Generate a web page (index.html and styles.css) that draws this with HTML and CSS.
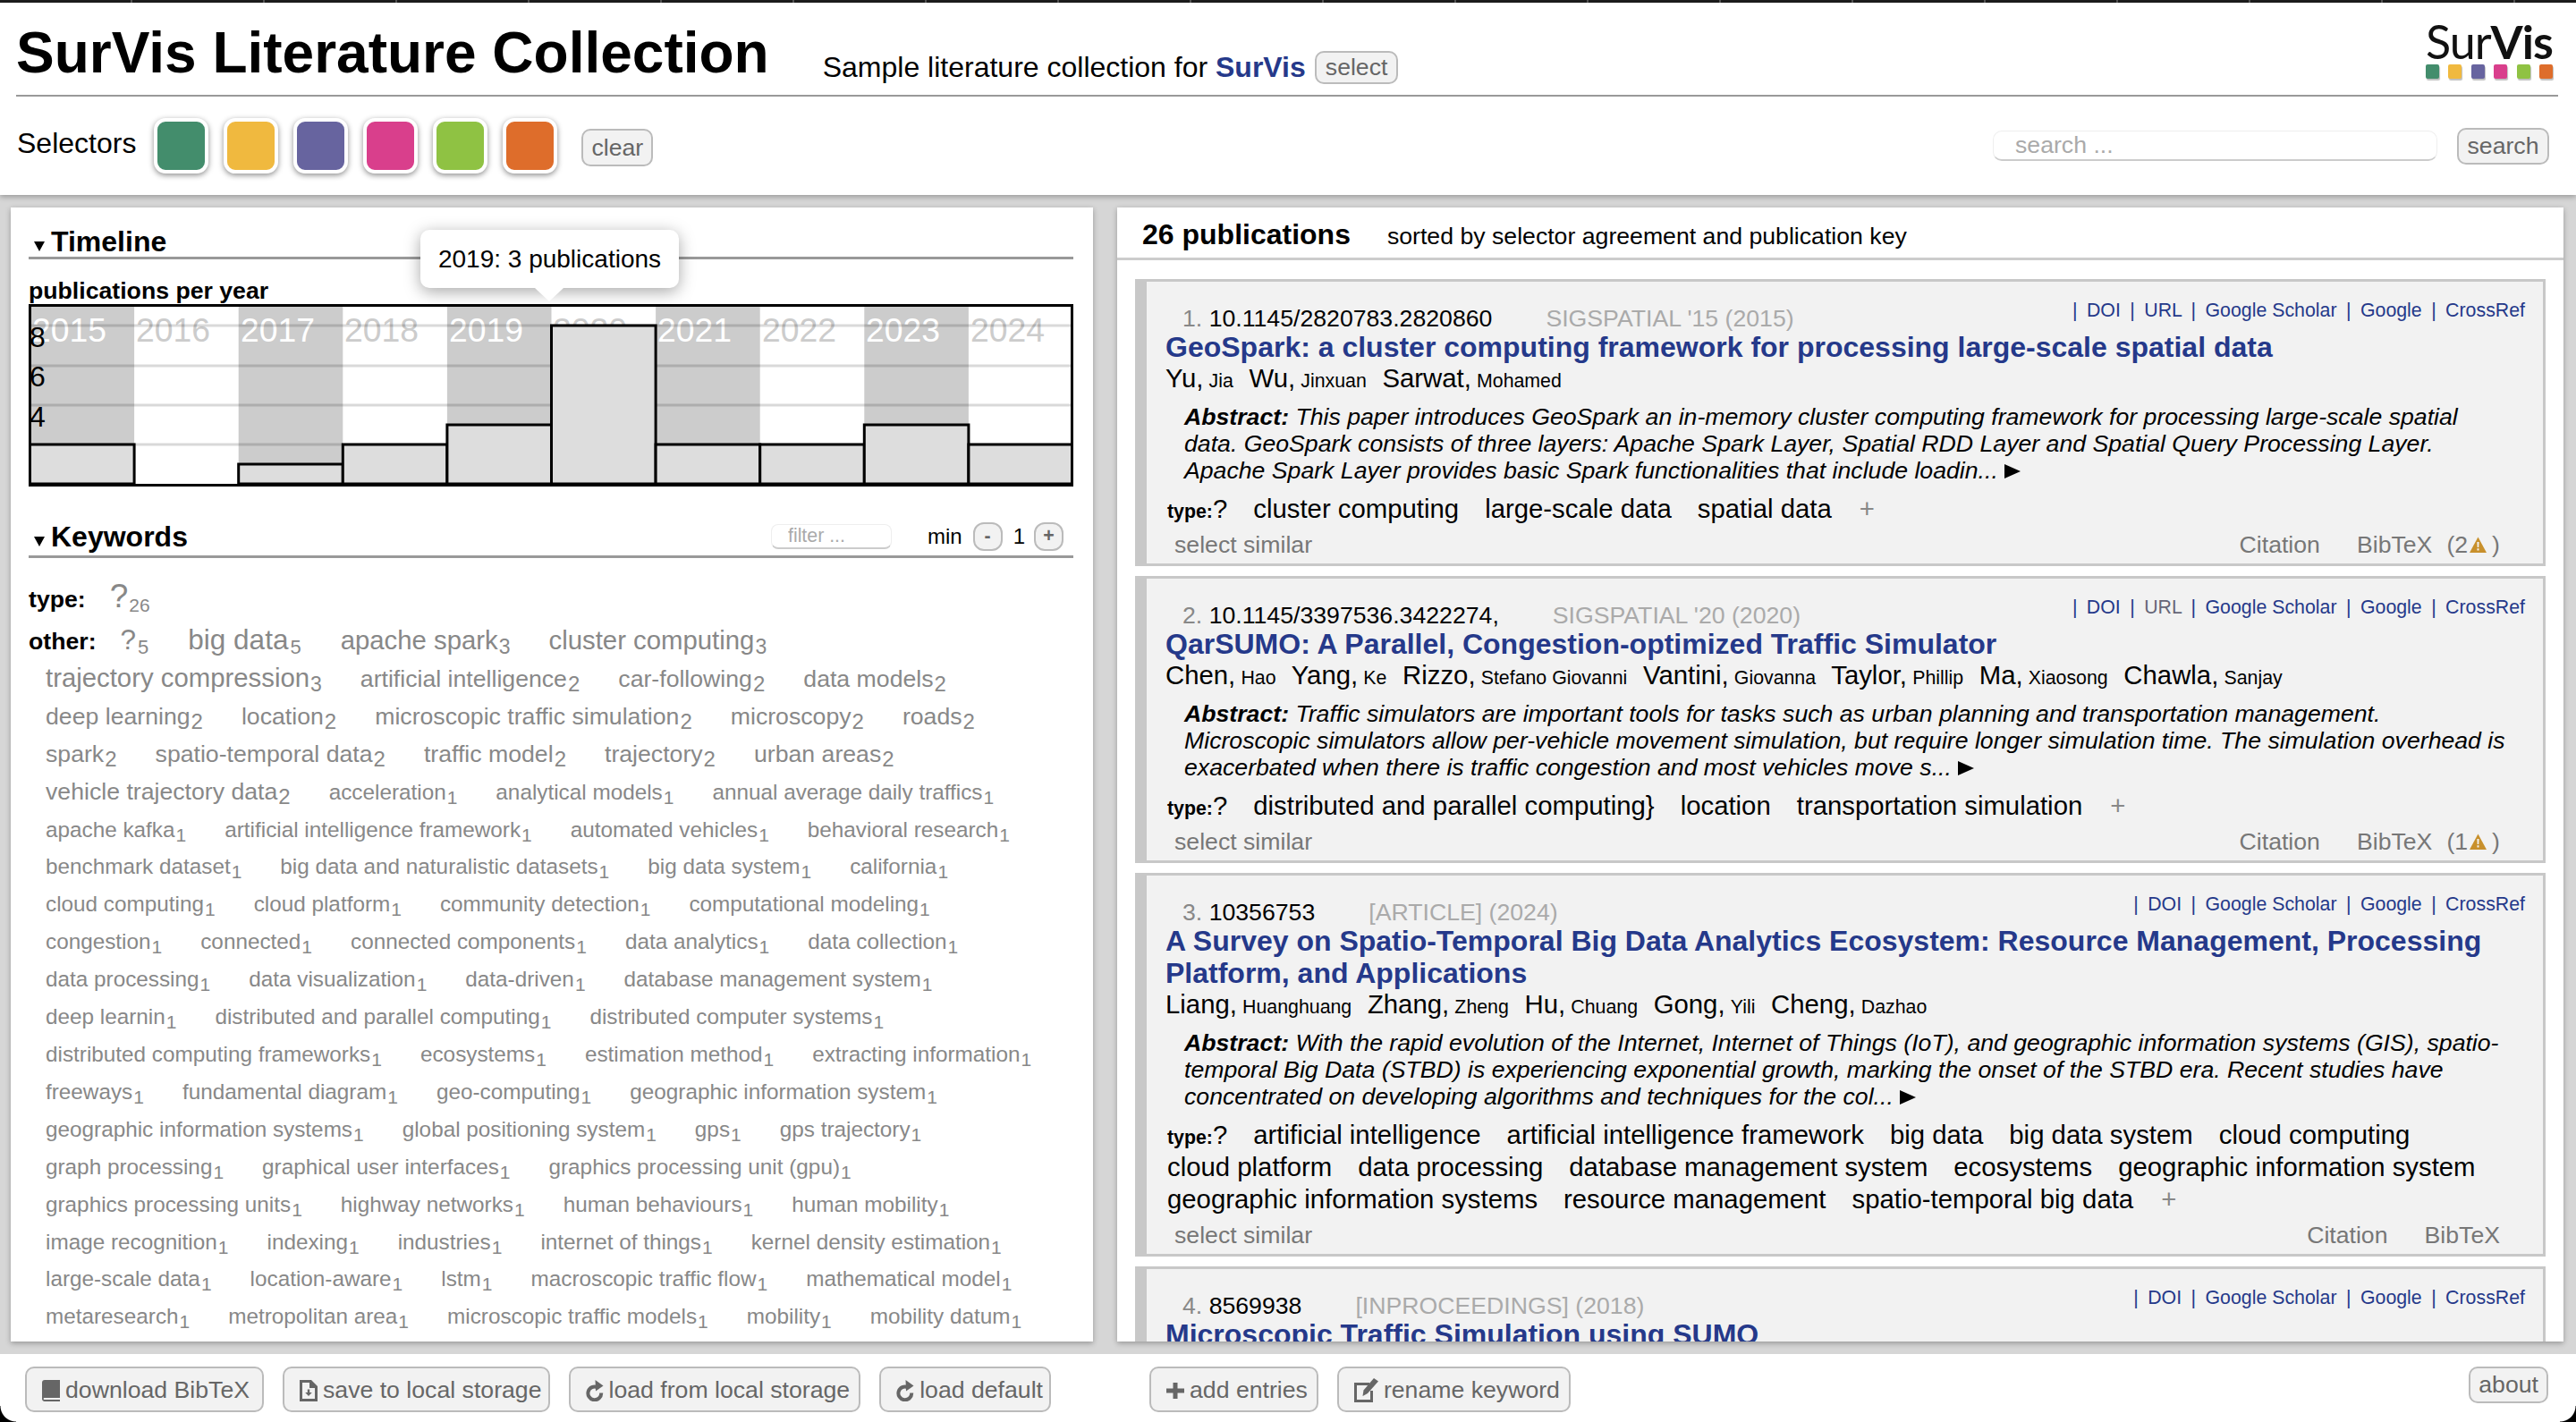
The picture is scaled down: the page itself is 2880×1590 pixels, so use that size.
FILE: index.html
```html
<!DOCTYPE html>
<html lang="en">

<head>
    <meta charset="UTF-8">
    <title>SurVis Literature Collection</title>
    <link rel="stylesheet" href="styles.css">
</head>

<body>
    <div class="top-strip"></div>

    <header class="page-head">
        <div class="title-row">
            <h1>SurVis Literature Collection</h1>
            <p class="subtitle">Sample literature collection for <a class="survis-link">SurVis</a></p>
            <button class="btn btn-select">select</button>
            <div class="logo">
                <div class="logo-text">Sur<b>Vis</b></div>
                <div class="logo-squares">
                    <i class="c-green"></i><i class="c-yellow"></i><i class="c-purple"></i><i class="c-pink"></i><i class="c-lime"></i><i class="c-orange"></i>
                </div>
            </div>
        </div>
        <div class="selector-row">
            <span class="selector-label">Selectors</span>
            <div class="selectors">
                <div class="selector c-green"></div>
                <div class="selector c-yellow"></div>
                <div class="selector c-purple"></div>
                <div class="selector c-pink"></div>
                <div class="selector c-lime"></div>
                <div class="selector c-orange"></div>
            </div>
            <button class="btn btn-clear">clear</button>
            <input class="search-input" type="text" placeholder="search ...">
            <button class="btn btn-search">search</button>
        </div>
    </header>

    <main class="panels">
        <section class="panel panel-left">
            <h2 class="section-head"><span class="arrow"></span>Timeline</h2>
            <div class="chart-title">publications per year</div>
            <svg class="chart" width="1168" height="204" viewBox="0 0 1168 204">
                <rect class="col" x="1.5" y="3" width="116.6" height="198"></rect>
                <rect class="col" x="234.7" y="3" width="116.6" height="198"></rect>
                <rect class="col" x="467.9" y="3" width="116.6" height="198"></rect>
                <rect class="col" x="701.1" y="3" width="116.6" height="198"></rect>
                <rect class="col" x="934.3" y="3" width="116.6" height="198"></rect>

                <text class="year on-grey" x="4" y="42">2015</text>
                <text class="year" x="120" y="42">2016</text>
                <text class="year on-grey" x="237" y="42">2017</text>
                <text class="year" x="353" y="42">2018</text>
                <text class="year on-grey" x="470" y="42">2019</text>
                <text class="year" x="586" y="42">2020</text>
                <text class="year on-grey" x="703" y="42">2021</text>
                <text class="year" x="820" y="42">2022</text>
                <text class="year on-grey" x="936" y="42">2023</text>
                <text class="year" x="1053" y="42">2024</text>

                <line class="grid" x1="3" x2="1165" y1="24" y2="24"></line>
                <line class="grid" x1="3" x2="1165" y1="69" y2="69"></line>
                <line class="grid" x1="3" x2="1165" y1="113" y2="113"></line>
                <line class="grid" x1="3" x2="1165" y1="157" y2="157"></line>

                <text class="axis" x="1" y="48">8</text>
                <text class="axis" x="1" y="92">6</text>
                <text class="axis" x="1" y="137">4</text>

                <rect class="bar" x="1.5" y="157" width="116.6" height="44"></rect>
                <rect class="bar" x="118.1" y="201" width="116.6" height="0"></rect>
                <rect class="bar" x="234.7" y="179" width="116.6" height="22"></rect>
                <rect class="bar" x="351.3" y="157" width="116.6" height="44"></rect>
                <rect class="bar" x="467.9" y="135" width="116.6" height="66"></rect>
                <rect class="bar" x="584.5" y="24" width="116.6" height="177"></rect>
                <rect class="bar" x="701.1" y="157" width="116.6" height="44"></rect>
                <rect class="bar" x="817.7" y="157" width="116.6" height="44"></rect>
                <rect class="bar" x="934.3" y="135" width="116.6" height="66"></rect>
                <rect class="bar" x="1050.9" y="157" width="116.6" height="44"></rect>

                <rect class="frame" x="1.5" y="1.5" width="1165" height="201"></rect>
            </svg>
            <div class="tooltip">2019: 3 publications</div>

            <div class="section-head keywords-head">
                <h2 class="keywords-title"><span class="arrow"></span>Keywords</h2>
                <input class="filter-input" type="text" placeholder="filter ...">
                <span class="min-label">min</span>
                <button class="btn btn-step">-</button>
                <span class="min-value">1</span>
                <button class="btn btn-step">+</button>
            </div>

            <div class="tag-cloud tag-cloud-type">
                <span class="cloud-label">type:</span>
                <span class="tag s26">?<sub>26</sub></span>
            </div>
            <div class="tag-cloud">
                <span class="cloud-label">other:</span>
                <span class="tag s5">?<sub>5</sub></span>
                <span class="tag s5">big data<sub>5</sub></span>
                <span class="tag s3">apache spark<sub>3</sub></span>
                <span class="tag s3">cluster computing<sub>3</sub></span>
                <span class="tag s3">trajectory compression<sub>3</sub></span>
                <span class="tag s2">artificial intelligence<sub>2</sub></span>
                <span class="tag s2">car-following<sub>2</sub></span>
                <span class="tag s2">data models<sub>2</sub></span>
                <span class="tag s2">deep learning<sub>2</sub></span>
                <span class="tag s2">location<sub>2</sub></span>
                <span class="tag s2">microscopic traffic simulation<sub>2</sub></span>
                <span class="tag s2">microscopy<sub>2</sub></span>
                <span class="tag s2">roads<sub>2</sub></span>
                <span class="tag s2">spark<sub>2</sub></span>
                <span class="tag s2">spatio-temporal data<sub>2</sub></span>
                <span class="tag s2">traffic model<sub>2</sub></span>
                <span class="tag s2">trajectory<sub>2</sub></span>
                <span class="tag s2">urban areas<sub>2</sub></span>
                <span class="tag s2">vehicle trajectory data<sub>2</sub></span>
                <span class="tag">acceleration<sub>1</sub></span>
                <span class="tag">analytical models<sub>1</sub></span>
                <span class="tag">annual average daily traffics<sub>1</sub></span>
                <span class="tag">apache kafka<sub>1</sub></span>
                <span class="tag">artificial intelligence framework<sub>1</sub></span>
                <span class="tag">automated vehicles<sub>1</sub></span>
                <span class="tag">behavioral research<sub>1</sub></span>
                <span class="tag">benchmark dataset<sub>1</sub></span>
                <span class="tag">big data and naturalistic datasets<sub>1</sub></span>
                <span class="tag">big data system<sub>1</sub></span>
                <span class="tag">california<sub>1</sub></span>
                <span class="tag">cloud computing<sub>1</sub></span>
                <span class="tag">cloud platform<sub>1</sub></span>
                <span class="tag">community detection<sub>1</sub></span>
                <span class="tag">computational modeling<sub>1</sub></span>
                <span class="tag">congestion<sub>1</sub></span>
                <span class="tag">connected<sub>1</sub></span>
                <span class="tag">connected components<sub>1</sub></span>
                <span class="tag">data analytics<sub>1</sub></span>
                <span class="tag">data collection<sub>1</sub></span>
                <span class="tag">data processing<sub>1</sub></span>
                <span class="tag">data visualization<sub>1</sub></span>
                <span class="tag">data-driven<sub>1</sub></span>
                <span class="tag">database management system<sub>1</sub></span>
                <span class="tag">deep learnin<sub>1</sub></span>
                <span class="tag">distributed and parallel computing<sub>1</sub></span>
                <span class="tag">distributed computer systems<sub>1</sub></span>
                <span class="tag">distributed computing frameworks<sub>1</sub></span>
                <span class="tag">ecosystems<sub>1</sub></span>
                <span class="tag">estimation method<sub>1</sub></span>
                <span class="tag">extracting information<sub>1</sub></span>
                <span class="tag">freeways<sub>1</sub></span>
                <span class="tag">fundamental diagram<sub>1</sub></span>
                <span class="tag">geo-computing<sub>1</sub></span>
                <span class="tag">geographic information system<sub>1</sub></span>
                <span class="tag">geographic information systems<sub>1</sub></span>
                <span class="tag">global positioning system<sub>1</sub></span>
                <span class="tag">gps<sub>1</sub></span>
                <span class="tag">gps trajectory<sub>1</sub></span>
                <span class="tag">graph processing<sub>1</sub></span>
                <span class="tag">graphical user interfaces<sub>1</sub></span>
                <span class="tag">graphics processing unit (gpu)<sub>1</sub></span>
                <span class="tag">graphics processing units<sub>1</sub></span>
                <span class="tag">highway networks<sub>1</sub></span>
                <span class="tag">human behaviours<sub>1</sub></span>
                <span class="tag">human mobility<sub>1</sub></span>
                <span class="tag">image recognition<sub>1</sub></span>
                <span class="tag">indexing<sub>1</sub></span>
                <span class="tag">industries<sub>1</sub></span>
                <span class="tag">internet of things<sub>1</sub></span>
                <span class="tag">kernel density estimation<sub>1</sub></span>
                <span class="tag">large-scale data<sub>1</sub></span>
                <span class="tag">location-aware<sub>1</sub></span>
                <span class="tag">lstm<sub>1</sub></span>
                <span class="tag">macroscopic traffic flow<sub>1</sub></span>
                <span class="tag">mathematical model<sub>1</sub></span>
                <span class="tag">metaresearch<sub>1</sub></span>
                <span class="tag">metropolitan area<sub>1</sub></span>
                <span class="tag">microscopic traffic models<sub>1</sub></span>
                <span class="tag">mobility<sub>1</sub></span>
                <span class="tag">mobility datum<sub>1</sub></span>
            </div>
        </section>

        <section class="panel panel-right">
            <div class="list-head">
                <strong class="list-count">26 publications</strong>
                <span class="list-sort">sorted by selector agreement and publication key</span>
            </div>
            <div class="pub-list">
                <article class="pub">
                    <div class="pub-top">
                        <div class="pub-id"><span class="pub-num">1.</span> 10.1145/2820783.2820860<span class="pub-venue">SIGSPATIAL '15 (2015)</span></div>
                        <div class="pub-links"><i>|</i> DOI <i>|</i> URL <i>|</i> Google Scholar <i>|</i> Google <i>|</i> CrossRef</div>
                    </div>
                    <h3 class="pub-title">GeoSpark: a cluster computing framework for processing large-scale spatial data</h3>
                    <div class="pub-authors">
                        <span class="author">Yu, <small>Jia</small></span>
                        <span class="author">Wu, <small>Jinxuan</small></span>
                        <span class="author">Sarwat, <small>Mohamed</small></span>
                    </div>
                    <p class="pub-abstract"><b>Abstract:</b> This paper introduces GeoSpark an in-memory cluster computing framework for processing large-scale spatial data. GeoSpark consists of three layers: Apache Spark Layer, Spatial RDD Layer and Spatial Query Processing Layer. Apache Spark Layer provides basic Spark functionalities that include loadin... <span class="more"></span></p>
                    <div class="pub-tags">
                        <span class="pub-type"><b>type:</b>?</span>
                        <span>cluster computing</span>
                        <span>large-scale data</span>
                        <span>spatial data</span>
                        <span class="tag-add">+</span>
                    </div>
                    <div class="pub-foot">
                        <span>select similar</span>
                        <span class="pub-actions"><span>Citation</span><span>BibTeX</span><span class="warn-count">(2<svg class="warn" width="19" height="18" viewBox="0 0 19 18"><path d="M9.5 0.5 L19 18 H0 Z" fill="#c8902c"></path><path d="M8.4 6 H10.6 L10.3 12 H8.7 Z M8.5 13.3 H10.5 V15.4 H8.5 Z" fill="#f2f2f2"></path></svg>)</span></span>
                    </div>
                </article>

                <article class="pub">
                    <div class="pub-top">
                        <div class="pub-id"><span class="pub-num">2.</span> 10.1145/3397536.3422274,<span class="pub-venue">SIGSPATIAL '20 (2020)</span></div>
                        <div class="pub-links"><i>|</i> DOI <i>|</i> <span class="link-seen">URL</span> <i>|</i> Google Scholar <i>|</i> Google <i>|</i> CrossRef</div>
                    </div>
                    <h3 class="pub-title">QarSUMO: A Parallel, Congestion-optimized Traffic Simulator</h3>
                    <div class="pub-authors">
                        <span class="author">Chen, <small>Hao</small></span>
                        <span class="author">Yang, <small>Ke</small></span>
                        <span class="author">Rizzo, <small>Stefano Giovanni</small></span>
                        <span class="author">Vantini, <small>Giovanna</small></span>
                        <span class="author">Taylor, <small>Phillip</small></span>
                        <span class="author">Ma, <small>Xiaosong</small></span>
                        <span class="author">Chawla, <small>Sanjay</small></span>
                    </div>
                    <p class="pub-abstract"><b>Abstract:</b> Traffic simulators are important tools for tasks such as urban planning and transportation management. Microscopic simulators allow per-vehicle movement simulation, but require longer simulation time. The simulation overhead is exacerbated when there is traffic congestion and most vehicles move s... <span class="more"></span></p>
                    <div class="pub-tags">
                        <span class="pub-type"><b>type:</b>?</span>
                        <span>distributed and parallel computing}</span>
                        <span>location</span>
                        <span>transportation simulation</span>
                        <span class="tag-add">+</span>
                    </div>
                    <div class="pub-foot">
                        <span>select similar</span>
                        <span class="pub-actions"><span>Citation</span><span>BibTeX</span><span class="warn-count">(1<svg class="warn" width="19" height="18" viewBox="0 0 19 18"><path d="M9.5 0.5 L19 18 H0 Z" fill="#c8902c"></path><path d="M8.4 6 H10.6 L10.3 12 H8.7 Z M8.5 13.3 H10.5 V15.4 H8.5 Z" fill="#f2f2f2"></path></svg>)</span></span>
                    </div>
                </article>

                <article class="pub">
                    <div class="pub-top">
                        <div class="pub-id"><span class="pub-num">3.</span> 10356753<span class="pub-venue">[ARTICLE] (2024)</span></div>
                        <div class="pub-links"><i>|</i> DOI <i>|</i> Google Scholar <i>|</i> Google <i>|</i> CrossRef</div>
                    </div>
                    <h3 class="pub-title">A Survey on Spatio-Temporal Big Data Analytics Ecosystem: Resource Management, Processing Platform, and Applications</h3>
                    <div class="pub-authors">
                        <span class="author">Liang, <small>Huanghuang</small></span>
                        <span class="author">Zhang, <small>Zheng</small></span>
                        <span class="author">Hu, <small>Chuang</small></span>
                        <span class="author">Gong, <small>Yili</small></span>
                        <span class="author">Cheng, <small>Dazhao</small></span>
                    </div>
                    <p class="pub-abstract"><b>Abstract:</b> With the rapid evolution of the Internet, Internet of Things (IoT), and geographic information systems (GIS), spatio-temporal Big Data (STBD) is experiencing exponential growth, marking the onset of the STBD era. Recent studies have concentrated on developing algorithms and techniques for the col... <span class="more"></span></p>
                    <div class="pub-tags">
                        <span class="pub-type"><b>type:</b>?</span>
                        <span>artificial intelligence</span>
                        <span>artificial intelligence framework</span>
                        <span>big data</span>
                        <span>big data system</span>
                        <span>cloud computing</span>
                        <span>cloud platform</span>
                        <span>data processing</span>
                        <span>database management system</span>
                        <span>ecosystems</span>
                        <span>geographic information system</span>
                        <span>geographic information systems</span>
                        <span>resource management</span>
                        <span>spatio-temporal big data</span>
                        <span class="tag-add">+</span>
                    </div>
                    <div class="pub-foot">
                        <span>select similar</span>
                        <span class="pub-actions"><span>Citation</span><span>BibTeX</span></span>
                    </div>
                </article>

                <article class="pub">
                    <div class="pub-top">
                        <div class="pub-id"><span class="pub-num">4.</span> 8569938<span class="pub-venue">[INPROCEEDINGS] (2018)</span></div>
                        <div class="pub-links"><i>|</i> DOI <i>|</i> Google Scholar <i>|</i> Google <i>|</i> CrossRef</div>
                    </div>
                    <h3 class="pub-title">Microscopic Traffic Simulation using SUMO</h3>
                </article>
            </div>
        </section>
    </main>

    <footer class="page-foot">
        <div class="foot-group">
            <button class="btn btn-foot">
                <svg class="icon" width="20" height="24" viewBox="0 0 20 24"><path d="M3 0 H20 V20 H3 C2 20 1.6 20.6 1.6 21 C1.6 21.5 2 22 3 22 H20 V24 H3 C1 24 0 22.6 0 21 V3 C0 1.2 1.2 0 3 0 Z" fill="#666"></path></svg>
                download BibTeX
            </button>
            <button class="btn btn-foot">
                <svg class="icon" width="20" height="24" viewBox="0 0 20 24"><path fill-rule="evenodd" d="M0 0 H13 L20 7 V24 H0 Z M3 3 V21 H17 V9 H11 V3 Z" fill="#666"></path><path d="M8.8 10.5 H11.2 V14 H13.8 L10 18 L6.2 14 H8.8 Z" fill="#666"></path></svg>
                save to local storage
            </button>
            <button class="btn btn-foot">
                <svg class="icon" width="20" height="24" viewBox="0 0 20 24"><path d="M13 8.2 A7.4 7.4 0 1 0 17.2 14.5" fill="none" stroke="#666" stroke-width="4"></path><path d="M10.5 0 L19.5 6.5 L11 12.5 Z" fill="#666"></path></svg>
                load from local storage
            </button>
            <button class="btn btn-foot">
                <svg class="icon" width="20" height="24" viewBox="0 0 20 24"><path d="M13 8.2 A7.4 7.4 0 1 0 17.2 14.5" fill="none" stroke="#666" stroke-width="4"></path><path d="M10.5 0 L19.5 6.5 L11 12.5 Z" fill="#666"></path></svg>
                load default
            </button>
        </div>
        <div class="foot-group">
            <button class="btn btn-foot">
                <svg class="icon" width="20" height="18" viewBox="0 0 20 18"><path d="M7.5 0 H12.5 V6.5 H20 V11.5 H12.5 V18 H7.5 V11.5 H0 V6.5 H7.5 Z" fill="#666"></path></svg>
                add entries
            </button>
            <button class="btn btn-foot">
                <svg class="icon" width="27" height="27" viewBox="0 0 27 27"><path fill-rule="evenodd" d="M0 5 H17 V8 H3 V24 H18 V14 H21 V27 H0 Z" fill="#666"></path><path d="M22 0 L27 3.5 L15 17 L9.5 20 L10.5 13.5 Z" fill="#666"></path></svg>
                rename keyword
            </button>
        </div>
        <button class="btn btn-about">about</button>
    </footer>

    <div class="corner corner-left"></div>
    <div class="corner corner-right"></div>
</body>

</html>
```
FILE: styles.css
```css
* {
    box-sizing: border-box;
}

html,
body {
    margin: 0;
    height: 100%;
    overflow: hidden;
}

body {
    display: grid;
    grid-template-rows: 3px 215px 1fr 76px;
    height: 100vh;
    background: #d6d6d6;
    color: #000;
    font-family: "Liberation Sans", Arial, sans-serif;
    font-size: 26.67px;
}

.top-strip {
    background: #1d1d1d repeating-linear-gradient(90deg, #1d1d1d 0, #1d1d1d 146px, #555 146px, #555 148px);
}

/* colours of the selectors */
.c-green { background: #438d6c; }
.c-yellow { background: #f0b93f; }
.c-purple { background: #67649f; }
.c-pink { background: #d93f8c; }
.c-lime { background: #8fc243; }
.c-orange { background: #de6d2b; }

.btn {
    font-family: inherit;
    font-size: 26.67px;
    color: #666;
    background: #f2f2f2;
    border: 2px solid #bbb;
    border-radius: 10px;
    padding: 0 9px;
    margin: 0;
}

/* header */
.page-head {
    position: relative;
    z-index: 2;
    background: #fff;
    padding: 0 20px 0 18px;
    box-shadow: 0 2px 6px rgba(0, 0, 0, .3);
}

.title-row {
    display: flex;
    align-items: baseline;
    height: 105px;
    padding-top: 9px;
    border-bottom: 2px solid #999;
}

h1 {
    margin: 0;
    font-size: 64px;
    line-height: 94px;
}

.subtitle {
    align-self: flex-start;
    margin: 45px 0 0 60px;
    font-size: 32px;
}

.survis-link {
    font-weight: bold;
    color: #25398a;
}

.btn-select {
    align-self: flex-start;
    margin: 45px 0 0 10px;
    height: 37px;
    padding: 0 10px;
}

.logo {
    margin: 0 4px 0 auto;
    align-self: flex-end;
    width: 144px;
    padding-bottom: 18px;
}

.logo-text {
    font-family: Lato, sans-serif;
    font-size: 52px;
    line-height: 46px;
    letter-spacing: -1px;
    color: #111;
}

.logo-squares {
    display: flex;
    justify-content: space-between;
    width: 142px;
    margin-top: 3px;
}

.logo-squares i {
    width: 15px;
    height: 16px;
    border-radius: 2px;
    box-shadow: 1px 2px 1px rgba(0, 0, 0, .25);
}

.selector-row {
    display: flex;
    align-items: center;
    height: 110px;
    padding-right: 10px;
}

.selector-label {
    font-size: 32px;
    margin: 0 20px 6px 1px;
}

.selectors {
    display: flex;
    gap: 17px;
}

.selector {
    width: 61px;
    height: 62px;
    border: 4px solid #fff;
    border-radius: 13px;
    box-shadow: 0 2px 6px rgba(0, 0, 0, .45);
}

.btn-clear {
    height: 42px;
    margin: 4px 0 0 27px;
}

.search-input {
    width: 497px;
    height: 34px;
    margin: 0 22px 0 auto;
    padding: 0 24px;
    border: 1px solid #eee;
    border-bottom: 2px solid #ccc;
    border-radius: 10px;
    font-family: inherit;
    font-size: 26.67px;
}

.search-input::placeholder,
.filter-input::placeholder {
    color: #aaa;
}

.btn-search {
    width: 103px;
    height: 41px;
    padding: 0;
}

/* panels */
.panels {
    display: grid;
    grid-template-columns: 1210px 1fr;
    gap: 27px;
    padding: 14px 14px 14px 12px;
    min-height: 0;
}

.panel {
    position: relative;
    background: #fff;
    box-shadow: 0 2px 6px rgba(0, 0, 0, .3);
    overflow: hidden;
    min-height: 0;
}

.panel-left {
    padding: 0 22px 0 20px;
}

.section-head {
    margin: 0;
    height: 58px;
    padding-top: 20px;
    font-size: 32px;
    line-height: 36px;
    border-bottom: 3px solid #999;
}

.arrow {
    display: inline-block;
    margin: 0 7px 0 6px;
    border-style: solid;
    border-width: 11px 6px 0;
    border-color: #000 transparent transparent;
}

.chart-title {
    margin-top: 18px;
    height: 32px;
    font-size: 26.67px;
    line-height: 34px;
    font-weight: bold;
}

.chart {
    display: block;
}

.col {
    fill: #ccc;
}

.year {
    font-size: 37.33px;
    fill: #ccc;
}

.year.on-grey {
    fill: #fff;
}

.grid {
    stroke: rgba(0, 0, 0, .15);
    stroke-width: 3;
}

.axis {
    font-size: 32px;
}

.bar {
    fill: #ddd;
    stroke: #000;
    stroke-width: 3;
}

.frame {
    fill: none;
    stroke: #000;
    stroke-width: 3;
}

.tooltip {
    position: absolute;
    left: 458px;
    top: 25px;
    width: 289px;
    height: 65px;
    background: #fff;
    border-radius: 10px;
    box-shadow: 0 4px 18px rgba(0, 0, 0, .35);
    text-align: center;
    font-size: 28px;
    line-height: 66px;
}

.tooltip::after {
    content: "";
    position: absolute;
    left: 128px;
    top: 65px;
    border-style: solid;
    border-width: 15px 16px 0;
    border-color: #fff transparent transparent;
}

.keywords-head {
    display: flex;
    align-items: center;
    height: 46px;
    margin-top: 34px;
    padding: 0 11px 0 0;
}

.keywords-title {
    margin: 0;
    font-size: 32px;
}

.filter-input {
    width: 135px;
    height: 28px;
    margin-left: auto;
    padding: 0 18px;
    border: 1px solid #eee;
    border-bottom: 2px solid #ccc;
    border-radius: 8px;
    font-family: inherit;
    font-size: 21.33px;
}

.min-label {
    margin-left: 40px;
    font-size: 24px;
    font-weight: normal;
}

.btn-step {
    width: 33px;
    height: 32px;
    padding: 0;
    font-size: 21.33px;
    font-weight: bold;
    border-radius: 12px;
    margin-left: 12px;
}

.min-value {
    margin-left: 12px;
    font-size: 24px;
    font-weight: normal;
}

.min-value + .btn-step {
    margin-left: 10px;
}

.tag-cloud {
    display: flex;
    flex-wrap: wrap;
    align-items: baseline;
    padding-right: 10px;
    color: #888;
}

.tag-cloud-type {
    margin-top: 22px;
    height: 49px;
}

.cloud-label {
    margin-right: 8px;
    font-size: 26.67px;
    font-weight: bold;
    color: #000;
}

.tag {
    margin: 0 24px 0 19px;
    font-size: 24.3px;
    line-height: 41.9px;
}

.tag sub {
    font-size: 21px;
    line-height: 0;
    margin-left: 1px;
    vertical-align: -5px;
}

.s2 { font-size: 26.67px; }
.s3 { font-size: 29.33px; }
.s5 { font-size: 31.5px; margin-right: 25px; }
.s26 { font-size: 37px; }

.s2 sub { font-size: 24px; }
.s3 sub { font-size: 23px; }
.s5 sub { font-size: 22px; margin-left: 2px; }

/* publication list */
.panel-right {
    display: flex;
    flex-direction: column;
}

.list-head {
    flex: none;
    display: flex;
    align-items: baseline;
    gap: 41px;
    height: 59px;
    padding: 12px 0 0 28px;
    border-bottom: 3px solid #ccc;
}

.list-count {
    font-size: 32px;
}

.list-sort {
    font-size: 26.67px;
}

.pub-list {
    flex: 1;
    min-height: 0;
    overflow: hidden;
    padding: 21px 20px 0;
}

.pub {
    margin-bottom: 11px;
    padding: 26px 20px 6px 21px;
    background: #f2f2f2;
    border: 3px solid #c8c8c8;
    border-left-width: 13px;
}

.pub-top {
    display: flex;
    justify-content: space-between;
    align-items: flex-start;
    height: 29px;
}

.pub-id {
    padding-left: 19px;
    line-height: 30px;
}

.pub-num {
    color: #888;
}

.pub-venue {
    margin-left: 60px;
    color: #aaa;
}

.pub-links {
    margin-top: -9px;
    font-size: 21.33px;
    line-height: 30px;
    color: #25398a;
}

.pub-links i {
    margin: 0 4.5px;
    font-style: normal;
}

.link-seen {
    color: #667;
}

.pub-title {
    margin: 0;
    font-size: 32px;
    line-height: 36px;
    color: #25398a;
}

.pub-authors {
    font-size: 29.33px;
    line-height: 34px;
}

.author {
    margin-right: 9.5px;
}

.author small {
    font-size: 21.33px;
    line-height: 0;
    margin-left: -2px;
}

.pub-abstract {
    margin: 11px 15px 0 21px;
    font-size: 26.67px;
    line-height: 30px;
    font-style: italic;
}

.more {
    display: inline-block;
    border-style: solid;
    border-width: 8px 0 8px 18px;
    border-color: transparent transparent transparent #000;
}

.pub-tags {
    display: flex;
    flex-wrap: wrap;
    align-items: baseline;
    column-gap: 29px;
    margin: 10px 0 0 2px;
    font-size: 29.33px;
    line-height: 36px;
}

.pub-type b {
    font-size: 21.33px;
    line-height: 0;
}

.tag-add {
    margin-left: 2px;
    color: #888;
}

.pub-foot {
    display: flex;
    justify-content: space-between;
    margin: 7px 28px 0 10px;
    font-size: 26.67px;
    line-height: 30px;
    color: #777;
}

.pub-actions {
    display: flex;
    gap: 41px;
}

.warn-count {
    margin-left: -25px;
}

.warn {
    margin: 0 6px 0 2px;
}

/* footer */
.page-foot {
    display: grid;
    grid-template-columns: 1257px 1fr auto;
    align-items: start;
    padding: 14px 31px 0 28px;
    background: #fff;
    position: relative;
    z-index: 2;
}

.foot-group {
    display: flex;
    gap: 21px;
}

.btn-foot {
    display: flex;
    align-items: center;
    gap: 6px;
    height: 51px;
    padding: 2px 10px 0 17px;
    white-space: nowrap;
}

.foot-group:first-child .btn-foot:nth-child(1) {
    padding-right: 14px;
}

.foot-group:first-child .btn-foot:nth-child(2),
.foot-group:first-child .btn-foot:nth-child(4) {
    padding-right: 7px;
}

.btn-about {
    grid-column: 3;
    height: 41px;
}

.corner {
    position: fixed;
    bottom: 0;
    z-index: 3;
    width: 18px;
    height: 18px;
}

.corner-left {
    left: 0;
    background: radial-gradient(circle at top right, transparent 17px, #000 18px);
}

.corner-right {
    right: 0;
    background: radial-gradient(circle at top left, transparent 17px, #000 18px);
}
```
